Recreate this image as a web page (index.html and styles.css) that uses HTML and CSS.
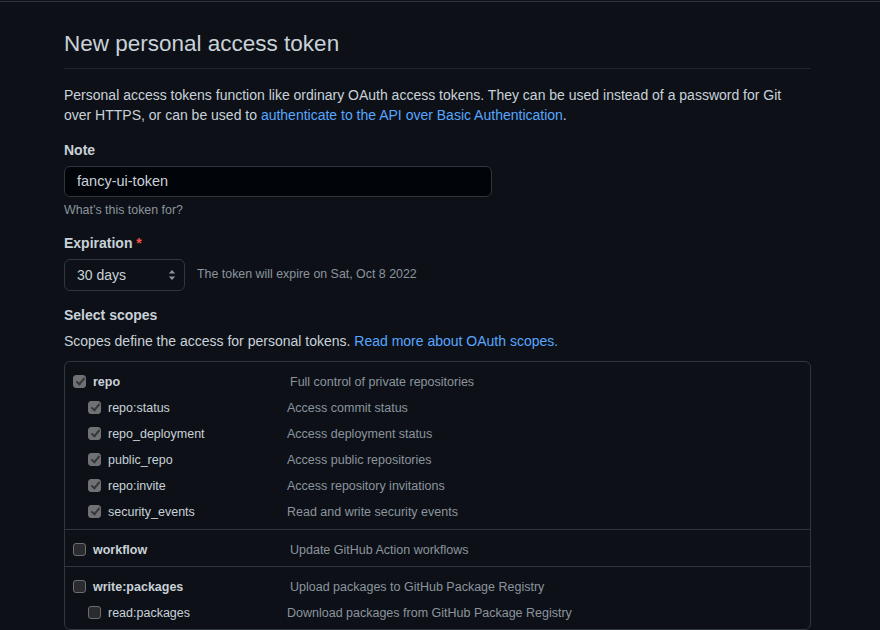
FILE: index.html
```html
<!DOCTYPE html>
<html lang="en">
<head>
<meta charset="utf-8">
<title>New personal access token</title>
<link rel="stylesheet" href="styles.css">
</head>
<body>
<div class="topline"></div>
<main class="container">
  <div class="subhead">
    <h2 class="subhead-heading">New personal access token</h2>
  </div>
  <p class="intro">Personal access tokens function like ordinary OAuth access tokens. They can be used instead of a password for Git over HTTPS, or can be used to <a href="#" class="link">authenticate to the API over Basic Authentication</a>.</p>

  <div class="form-group note-group">
    <label class="label">Note</label>
    <div class="input">fancy-ui-token</div>
    <p class="note">What’s this token for?</p>
  </div>

  <div class="form-group expire-group">
    <label class="label">Expiration <span class="required">*</span></label>
    <div class="expire-row">
      <div class="select">
        <span>30 days</span>
        <svg class="select-arrows" width="8" height="12" viewBox="0 0 8 12"><path d="M4 1 L7.2 4.6 H0.8 Z M4 11 L0.8 7.4 H7.2 Z" fill="#8b949e"/></svg>
      </div>
      <span class="expire-note">The token will expire on Sat, Oct 8 2022</span>
    </div>
  </div>

  <div class="form-group scopes-group">
    <label class="label">Select scopes</label>
    <p class="scopes-desc">Scopes define the access for personal tokens. <a href="#" class="link">Read more about OAuth scopes.</a></p>
  </div>

  <div class="scopes">
    <div class="scope-group first">
      <div class="row main">
        <span class="cb checked"></span>
        <span class="name">repo</span>
        <span class="desc">Full control of private repositories</span>
      </div>
      <div class="row sub">
        <span class="cb checked"></span>
        <span class="name">repo:status</span>
        <span class="desc">Access commit status</span>
      </div>
      <div class="row sub">
        <span class="cb checked"></span>
        <span class="name">repo_deployment</span>
        <span class="desc">Access deployment status</span>
      </div>
      <div class="row sub">
        <span class="cb checked"></span>
        <span class="name">public_repo</span>
        <span class="desc">Access public repositories</span>
      </div>
      <div class="row sub">
        <span class="cb checked"></span>
        <span class="name">repo:invite</span>
        <span class="desc">Access repository invitations</span>
      </div>
      <div class="row sub">
        <span class="cb checked"></span>
        <span class="name">security_events</span>
        <span class="desc">Read and write security events</span>
      </div>
    </div>
    <div class="scope-group">
      <div class="row main">
        <span class="cb"></span>
        <span class="name">workflow</span>
        <span class="desc">Update GitHub Action workflows</span>
      </div>
    </div>
    <div class="scope-group">
      <div class="row main">
        <span class="cb"></span>
        <span class="name">write:packages</span>
        <span class="desc">Upload packages to GitHub Package Registry</span>
      </div>
      <div class="row sub">
        <span class="cb"></span>
        <span class="name">read:packages</span>
        <span class="desc">Download packages from GitHub Package Registry</span>
      </div>
    </div>
  </div>
</main>
</body>
</html>
```

FILE: styles.css
```css
html, body {
  margin: 0;
  padding: 0;
  background: #0d1117;
  height: 100%;
  overflow: hidden;
}
body {
  font-family: "Liberation Sans", Arial, sans-serif;
  color: #c9d1d9;
  font-size: 14px;
  line-height: 20px;
}
.topline {
  margin-top: 1px;
  height: 0;
  border-top: 1px solid #30363d;
}
.container {
  width: 747px;
  padding: 23px 0 0 64px;
}
.subhead {
  padding-bottom: 6px;
  border-bottom: 1px solid #21262d;
  margin-bottom: 16px;
}
.subhead-heading {
  margin: 0;
  font-size: 22.5px;
  font-weight: 400;
  line-height: 37px;
}
.intro {
  margin: 0;
}
.link {
  color: #58a6ff;
  text-decoration: none;
}
.form-group {
  margin-top: 14px;
}
.note-group {
  margin-top: 15px;
}
.label {
  display: block;
  font-weight: 700;
  line-height: 20px;
  margin-bottom: 6px;
}
.required {
  color: #f85149;
}
.input {
  box-sizing: border-box;
  width: 428px;
  height: 31px;
  padding: 0 12px;
  background: #010409;
  border: 1px solid #30363d;
  border-radius: 6px;
  font-size: 14.5px;
  line-height: 29px;
}
.note {
  margin: 4px 0 0;
  font-size: 12.4px;
  line-height: 18px;
  color: #8b949e;
}
.expire-row {
  display: flex;
  align-items: center;
  gap: 12px;
}
.select {
  box-sizing: border-box;
  width: 121px;
  height: 32px;
  padding: 0 8px 0 12px;
  border: 1px solid #30363d;
  border-radius: 6px;
  background: #0d1117;
  display: flex;
  align-items: center;
  justify-content: space-between;
}
.expire-note {
  font-size: 12.4px;
  color: #8b949e;
  margin-top: -2px;
}
.scopes-desc {
  margin: 0;
}
.scopes {
  margin-top: 10px;
  border: 1px solid #30363d;
  border-radius: 6px;
}
.scope-group {
  padding: 7px 0 3px;
  border-top: 1px solid #30363d;
}
.scope-group.first {
  border-top: 0;
  padding-bottom: 4px;
}
.row {
  display: flex;
  align-items: center;
  height: 26px;
  font-size: 12.5px;
}
.row.main {
  padding-left: 8px;
}
.row.sub {
  padding-left: 23px;
}
.cb {
  box-sizing: border-box;
  width: 13px;
  height: 13px;
  border-radius: 3px;
  border: 1px solid #6e6e70;
  background: #2a2b2e;
  margin-right: 7px;
  margin-top: -2px;
  position: relative;
  flex: none;
}
.cb.checked {
  background: #707174;
  border-color: #707174;
}
.cb.checked::after {
  content: "";
  position: absolute;
  left: 3.5px;
  top: 0.5px;
  width: 3px;
  height: 7px;
  border: solid #363739;
  border-width: 0 2px 2px 0;
  transform: rotate(40deg);
}
.name {
  flex: none;
}
.main .name {
  font-weight: 700;
  width: 197px;
}
.sub .name {
  width: 179px;
}
.desc {
  color: #8b949e;
}
```
